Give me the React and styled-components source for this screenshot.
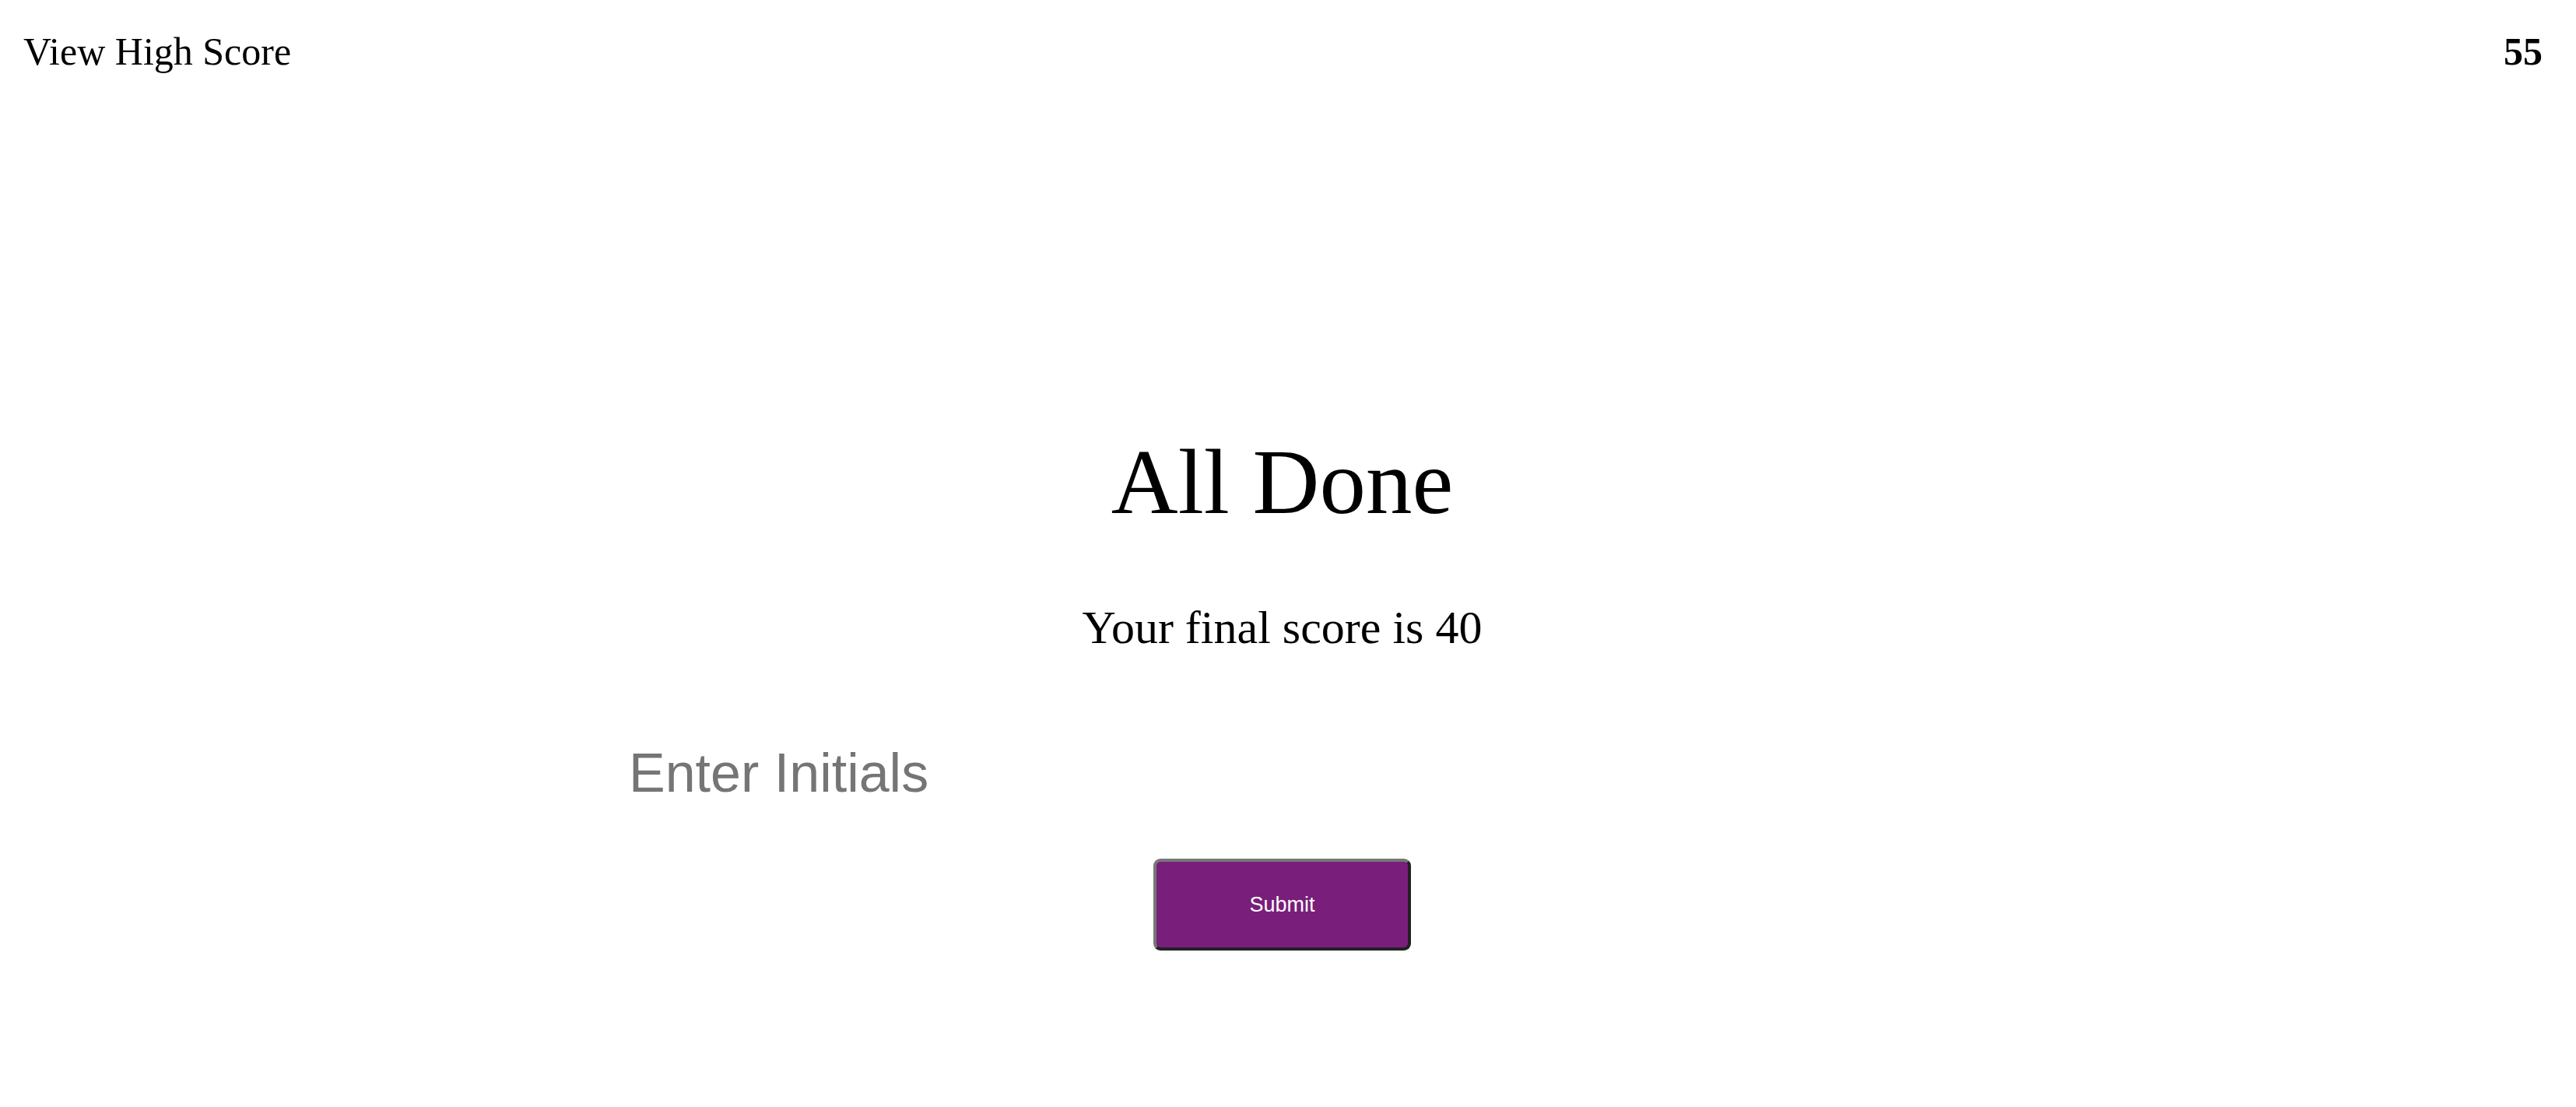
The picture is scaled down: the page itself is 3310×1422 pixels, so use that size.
import React from "react";
import styled, { createGlobalStyle } from "styled-components";

const GlobalStyle = createGlobalStyle`
  html, body {
    margin: 0;
    padding: 0;
    background: #ffffff;
  }
  body {
    font-family: "Liberation Serif", "Times New Roman", serif;
    color: #000000;
  }
`;

const Page = styled.div`
  width: 3310px;
  min-height: 1422px;
  display: flex;
  flex-direction: column;
`;

const Header = styled.header`
  display: flex;
  justify-content: space-between;
  align-items: flex-start;
  padding: 41px 43px 0 30px;
`;

const HeaderText = styled.div`
  font-family: "Liberation Serif", "Times New Roman", serif;
  font-size: 50px;
  line-height: 1;
  font-weight: ${(p) => (p.$bold ? 700 : 400)};
`;

const Main = styled.main`
  display: flex;
  flex-direction: column;
  align-items: center;
  padding-right: 15px;
  margin-top: 469px;
`;

const Title = styled.h1`
  margin: 0;
  font-family: "Liberation Serif", "Times New Roman", serif;
  font-weight: 400;
  font-size: 119px;
  line-height: 1;
`;

const Score = styled.p`
  margin: 97px 0 0;
  font-family: "Liberation Serif", "Times New Roman", serif;
  font-size: 60px;
  line-height: 1;
`;

const Form = styled.form`
  display: flex;
  flex-direction: column;
  align-items: center;
  width: 1693px;
  margin-top: 122px;
`;

const Input = styled.input`
  box-sizing: border-box;
  width: 100%;
  height: 70px;
  padding: 0 7px;
  border: none;
  outline: none;
  background: transparent;
  font-family: "Liberation Sans", Arial, sans-serif;
  font-size: 70px;
  line-height: 1;
  color: #000;
  &::placeholder {
    color: #757575;
  }
`;

const SubmitButton = styled.button`
  box-sizing: border-box;
  width: 331px;
  height: 118px;
  margin-top: 75px;
  background: #791e7a;
  color: #ffffff;
  border: 4px solid;
  border-color: #777777 #222222 #222222 #777777;
  border-radius: 9px;
  font-family: "Liberation Sans", Arial, sans-serif;
  font-size: 27px;
  cursor: pointer;
`;

export default function App() {
  return (
    <>
      <GlobalStyle />
      <Page>
        <Header>
          <HeaderText>View High Score</HeaderText>
          <HeaderText $bold>55</HeaderText>
        </Header>
        <Main>
          <Title>All Done</Title>
          <Score>Your final score is 40</Score>
          <Form onSubmit={(e) => e.preventDefault()}>
            <Input type="text" placeholder="Enter Initials" />
            <SubmitButton type="submit">Submit</SubmitButton>
          </Form>
        </Main>
      </Page>
    </>
  );
}
